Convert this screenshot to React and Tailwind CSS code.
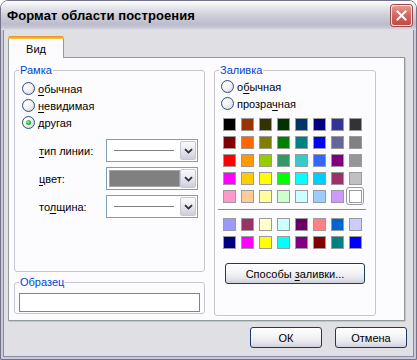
import React from "react";

const rows1 = [
  ["#000000", "#993300", "#333300", "#003300", "#003366", "#000080", "#333399", "#333333"],
  ["#800000", "#FF6600", "#808000", "#008000", "#008080", "#0000FF", "#666699", "#808080"],
  ["#FF0000", "#FF9900", "#99CC00", "#339966", "#33CCCC", "#3366FF", "#800080", "#969696"],
  ["#FF00FF", "#FFCC00", "#FFFF00", "#00FF00", "#00FFFF", "#00CCFF", "#993366", "#C0C0C0"],
  ["#FF99CC", "#FFCC99", "#FFFF99", "#CCFFCC", "#CCFFFF", "#99CCFF", "#CC99FF", "#FFFFFF"],
];
const rows2 = [
  ["#9999FF", "#993366", "#FFFFCC", "#CCFFFF", "#660066", "#FF8080", "#0066CC", "#CCCCFF"],
  ["#000080", "#FF00FF", "#FFFF00", "#00FFFF", "#800080", "#800000", "#008080", "#0000FF"],
];

function Radio({ checked }) {
  return (
    <span className="w-[13px] h-[13px] rounded-full border border-[#2a4f7a] bg-[radial-gradient(circle_at_35%_30%,#ffffff_0%,#f2f2f4_45%,#cfd0d8_100%)] flex items-center justify-center shrink-0">
      {checked && (
        <span className="w-[5px] h-[5px] rounded-full bg-[radial-gradient(circle_at_40%_40%,#9ef09e_0%,#2bb12b_55%,#157a15_100%)]" />
      )}
    </span>
  );
}

function RadioRow({ checked, children, className = "" }) {
  return (
    <div className={"h-[17px] flex items-center gap-[3px] " + className}>
      <Radio checked={checked} />
      <span className="text-black">{children}</span>
    </div>
  );
}

function U({ children }) {
  return <span className="underline underline-offset-[2px]">{children}</span>;
}

function Combo({ children }) {
  return (
    <div className="w-[92px] h-[23px] border border-[#7f9db9] bg-white flex items-stretch p-[1px]">
      <div className="flex-1 flex items-center">{children}</div>
      <div className="w-[16px] rounded-[2px] border border-[#c6c6d4] bg-[linear-gradient(180deg,#fbfbfd_0%,#e6e6ee_50%,#cfcfdc_100%)] flex items-center justify-center">
        <svg width="9" height="6" viewBox="0 0 9 6">
          <path d="M1 1.2 L4.5 4.6 L8 1.2" fill="none" stroke="#2b2b35" strokeWidth="1.8" />
        </svg>
      </div>
    </div>
  );
}

function Swatch({ c, selected }) {
  return (
    <div
      className={
        "w-[18px] h-[18px] flex items-center justify-center " +
        (selected ? "rounded-[3px] border border-[#9a9aa4]" : "")
      }
    >
      <div className="w-[13px] h-[13px] border border-[#9b9b9b]" style={{ backgroundColor: c }} />
    </div>
  );
}

function XPButton({ children, className = "" }) {
  return (
    <div
      className={
        "h-[21px] rounded-[3px] border border-[#1e3a5e] bg-[linear-gradient(180deg,#ffffff_0%,#f4f4f7_45%,#e2e2ea_80%,#cfcfdc_100%)] flex items-center justify-center text-black " +
        className
      }
    >
      {children}
    </div>
  );
}

export default function App() {
  return (
    <div className="w-[417px] h-[360px] bg-white font-['Liberation_Sans',Arial,sans-serif] text-[11px] leading-[14px]">
      <div className="w-[417px] h-[360px] border border-[#73738c] rounded-t-[8px] overflow-hidden flex flex-col">
        {/* Title bar */}
        <div className="h-[29px] shrink-0 flex items-center justify-between pl-[6px] pr-[4px] bg-[linear-gradient(180deg,#ffffff_0%,#ededf2_15%,#d2d2dc_45%,#bcbccc_80%,#c8c8d6_92%,#e2e2ea_100%)]">
          <span className="font-bold text-[13px] leading-[16px] text-black tracking-[0.1px]">
            Формат области построения
          </span>
          <div className="w-[21px] h-[21px] rounded-[3px] border border-[#f4e0e0] bg-[linear-gradient(180deg,#e89a94_0%,#d26a64_45%,#c04a46_100%)] flex items-center justify-center shadow-[0_0_0_1px_#9a4a4a]">
            <svg width="11" height="11" viewBox="0 0 11 11">
              <path d="M1.5 1.5 L9.5 9.5 M9.5 1.5 L1.5 9.5" stroke="#ffffff" strokeWidth="2" strokeLinecap="square" />
            </svg>
          </div>
        </div>
        {/* Body */}
        <div className="flex-1 border-x-[2px] border-b-[2px] border-[#c9c9d6] flex">
          <div className="flex-1 border-x border-b border-[#8a8aa2] bg-[#e0dfe3] pl-[4px] pr-[6px] pt-[6px] flex flex-col">
            {/* Tab */}
            <div className="relative z-10 -mb-px w-[56px] h-[22px] rounded-t-[3px] border-x border-[#919b9c] bg-[#fcfcfe] flex flex-col">
              <div className="h-[3px] rounded-t-[3px] -mx-px bg-[linear-gradient(180deg,#e68b2c_0%,#ffc73c_100%)]" />
              <div className="flex-1 flex items-center justify-center text-black">Вид</div>
            </div>
            {/* Panel */}
            <div className="w-[397px] h-[264px] border border-[#919b9c] bg-[#fcfcfe] shadow-[1px_1px_0_#c4c4cc] flex gap-[9px] pl-[5px] pt-[5px]">
              {/* Left column */}
              <div className="w-[191px] flex flex-col">
                <fieldset className="h-[209px] border border-[#c7c6cf] rounded-[3px]">
                  <legend className="ml-[4px] px-[1px] text-[#0046d5]">Рамка</legend>
                  <div className="pl-[7px] pt-[3px] flex flex-col">
                    <RadioRow>
                      <U>о</U>бычная
                    </RadioRow>
                    <RadioRow>
                      <U>н</U>евидимая
                    </RadioRow>
                    <RadioRow checked>другая</RadioRow>
                  </div>
                  <div className="mt-[8px] pl-[24px] flex flex-col gap-[5px]">
                    <div className="flex items-center">
                      <span className="w-[67px]">
                        <U>т</U>ип линии:
                      </span>
                      <Combo>
                        <div className="ml-[6px] w-[60px] h-px bg-[#808080]" />
                      </Combo>
                    </div>
                    <div className="flex items-center">
                      <span className="w-[67px]">
                        <U>ц</U>вет:
                      </span>
                      <Combo>
                        <div className="ml-[1px] w-[71px] h-[17px] bg-[#808080] border border-[#a4a4a4]" />
                      </Combo>
                    </div>
                    <div className="flex items-center">
                      <span className="w-[67px]">
                        то<U>л</U>щина:
                      </span>
                      <Combo>
                        <div className="ml-[6px] w-[60px] h-px bg-[#808080]" />
                      </Combo>
                    </div>
                  </div>
                </fieldset>
                <fieldset className="mt-[3px] h-[39px] border border-[#c7c6cf] rounded-[3px]">
                  <legend className="ml-[4px] px-[1px] text-[#0046d5]">Образец</legend>
                  <div className="pt-[4px] px-[4px]">
                    <div className="h-[19px] border border-[#848484] bg-white" />
                  </div>
                </fieldset>
              </div>
              {/* Right column */}
              <div className="w-[162px] flex flex-col">
                <fieldset className="h-[253px] border border-[#c7c6cf] rounded-[3px]">
                  <legend className="ml-[4px] px-[1px] text-[#0046d5]">Заливка</legend>
                  <div className="pl-[6px] pt-[1px] flex flex-col">
                    <RadioRow>
                      о<U>б</U>ычная
                    </RadioRow>
                    <RadioRow>
                      прозра<U>ч</U>ная
                    </RadioRow>
                  </div>
                  <div className="pl-[5px] mt-[3px] flex flex-col">
                    {rows1.map((r, i) => (
                      <div key={i} className="flex">
                        {r.map((c, j) => (
                          <Swatch key={j} c={c} selected={i === 4 && j === 7} />
                        ))}
                      </div>
                    ))}
                    <div className="mt-[4px] -ml-[2px] w-[148px] h-px bg-[#8c8c94]" />
                    <div className="mt-[5px] flex flex-col">
                      {rows2.map((r, i) => (
                        <div key={i} className="flex">
                          {r.map((c, j) => (
                            <Swatch key={j} c={c} />
                          ))}
                        </div>
                      ))}
                    </div>
                    <XPButton className="mt-[12px] ml-[5px] w-[140px] h-[20px]">
                      <span>
                        Способы <U>з</U>аливки...
                      </span>
                    </XPButton>
                  </div>
                </fieldset>
              </div>
            </div>
            {/* Buttons */}
            <div className="mt-[6px] flex justify-end gap-[13px]">
              <XPButton className="w-[72px]">ОК</XPButton>
              <XPButton className="w-[72px]">Отмена</XPButton>
            </div>
          </div>
        </div>
      </div>
    </div>
  );
}
